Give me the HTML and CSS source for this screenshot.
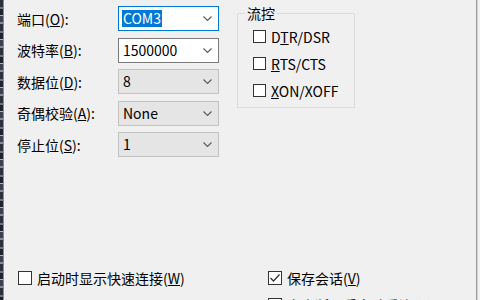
FILE: index.html
```html
<!DOCTYPE html>
<html lang="zh-CN">
<head>
<meta charset="utf-8">
<title>串口设置</title>
<link rel="stylesheet" href="styles.css">
</head>
<body>
<div class="screen">
  <div class="edge-left"></div>
  <div class="pane">
    <div class="top">
      <div class="form">
        <div class="row">
          <span class="label">端口(<u>O</u>):</span>
          <div class="combo focus"><span class="sel">COM3</span><svg class="chev" width="9" height="5" viewBox="0 0 9 5"><path d="M0.5 0.5 L4.5 4.5 L8.5 0.5"/></svg></div>
        </div>
        <div class="row">
          <span class="label">波特率(<u>B</u>):</span>
          <div class="combo"><span>1500000</span><svg class="chev" width="9" height="5" viewBox="0 0 9 5"><path d="M0.5 0.5 L4.5 4.5 L8.5 0.5"/></svg></div>
        </div>
        <div class="row">
          <span class="label">数据位(<u>D</u>):</span>
          <div class="combo list"><span>8</span><svg class="chev" width="9" height="5" viewBox="0 0 9 5"><path d="M0.5 0.5 L4.5 4.5 L8.5 0.5"/></svg></div>
        </div>
        <div class="row">
          <span class="label">奇偶校验(<u>A</u>):</span>
          <div class="combo list"><span>None</span><svg class="chev" width="9" height="5" viewBox="0 0 9 5"><path d="M0.5 0.5 L4.5 4.5 L8.5 0.5"/></svg></div>
        </div>
        <div class="row">
          <span class="label">停止位(<u>S</u>):</span>
          <div class="combo list"><span>1</span><svg class="chev" width="9" height="5" viewBox="0 0 9 5"><path d="M0.5 0.5 L4.5 4.5 L8.5 0.5"/></svg></div>
        </div>
      </div>
      <fieldset class="group">
        <legend>流控</legend>
        <div class="checks">
          <label class="check"><span class="box"></span><span>D<u>T</u>R/DSR</span></label>
          <label class="check"><span class="box"></span><span><u>R</u>TS/CTS</span></label>
          <label class="check"><span class="box"></span><span><u>X</u>ON/XOFF</span></label>
        </div>
      </fieldset>
    </div>
    <div class="bottom">
      <label class="check big"><span class="box"></span><span>启动时显示快速连接(<u>W</u>)</span></label>
      <label class="check big"><span class="box checked"><svg width="12" height="12" viewBox="0 0 12 12"><path d="M1.5 6 L4.5 9 L10.5 2.5"/></svg></span><span>保存会话(<u>V</u>)</span></label>
      <span></span>
      <label class="check big"><span class="box"></span><span>上次断开后自动重连(<u>R</u>)</span></label>
    </div>
  </div>
  <div class="edge-right"></div>
</div>
</body>
</html>
```
FILE: styles.css
```css
html, body {
  margin: 0;
  padding: 0;
  background: #f0f0f0;
}
body {
  font-family: "Noto Sans CJK SC", "Noto Sans", sans-serif;
  font-size: 14px;
  color: #000;
}
.screen {
  width: 480px;
  height: 300px;
  overflow: hidden;
  display: flex;
  background: #f0f0f0;
}
.edge-left {
  width: 3px;
  flex: none;
  border-right: 1px solid #8e8e8e;
  background: repeating-linear-gradient(to bottom,
    #2c3140 0 7px, #6f7484 7px 9px, #1e2330 9px 15px,
    #b9b59e 15px 16px, #3a3f52 16px 22px, #868a96 22px 24px);
}
.pane {
  flex: 1;
  min-width: 0;
}
.top {
  display: flex;
  align-items: flex-start;
  padding-top: 6px;
}
.form {
  padding-left: 13px;
  display: flex;
  flex-direction: column;
  gap: 6.5px;
}
.row {
  display: flex;
  align-items: center;
  height: 25px;
}
.label {
  width: 101px;
  line-height: 16px;
}
u {
  text-decoration-thickness: 1px;
  text-underline-offset: 1px;
}
.combo {
  box-sizing: border-box;
  width: 101px;
  height: 25px;
  border: 1px solid #7a7a7a;
  background: #fff;
  display: flex;
  align-items: center;
  justify-content: space-between;
  padding: 0 6px 0 4px;
  line-height: 17px;
}
.combo.focus {
  border-color: #0078d7;
}
.combo.list {
  background: #e5e5e5;
  border-color: #c2c2c2;
}
.sel {
  background: #0078d7;
  color: #fff;
  padding: 0 1px;
  margin-left: -1px;
}
.chev {
  flex: none;
}
.chev path {
  fill: none;
  stroke: #5a5a5a;
  stroke-width: 1.1;
}
.group {
  margin: 0 0 0 18px;
  padding: 0 16px 3px 7px;
  border: 1px solid #dcdcdc;
  width: 86px;
}
.group legend {
  padding: 0 2px;
  line-height: 14px;
}
.checks {
  margin: 3px 0 0 8px;
  display: flex;
  flex-direction: column;
}
.check {
  display: flex;
  align-items: center;
  gap: 5px;
  height: 27px;
  line-height: 16px;
  white-space: nowrap;
}
.box {
  box-sizing: border-box;
  width: 13px;
  height: 13px;
  border: 1px solid #333;
  background: #fff;
  flex: none;
  display: flex;
  align-items: center;
  justify-content: center;
}
.bottom {
  margin-top: 107px;
  padding-left: 14px;
  display: grid;
  grid-template-columns: 250px auto;
  row-gap: 0;
}
.check.big {
  height: 27px;
}
.check.big .box {
  width: 14px;
  height: 14px;
}
.box.checked svg path {
  fill: none;
  stroke: #333;
  stroke-width: 1.3;
}
.edge-right {
  width: 1px;
  flex: none;
  background: #9c9c9c;
  border-right: 1px solid #d2d2d2;
  margin-right: 2px;
}
```
